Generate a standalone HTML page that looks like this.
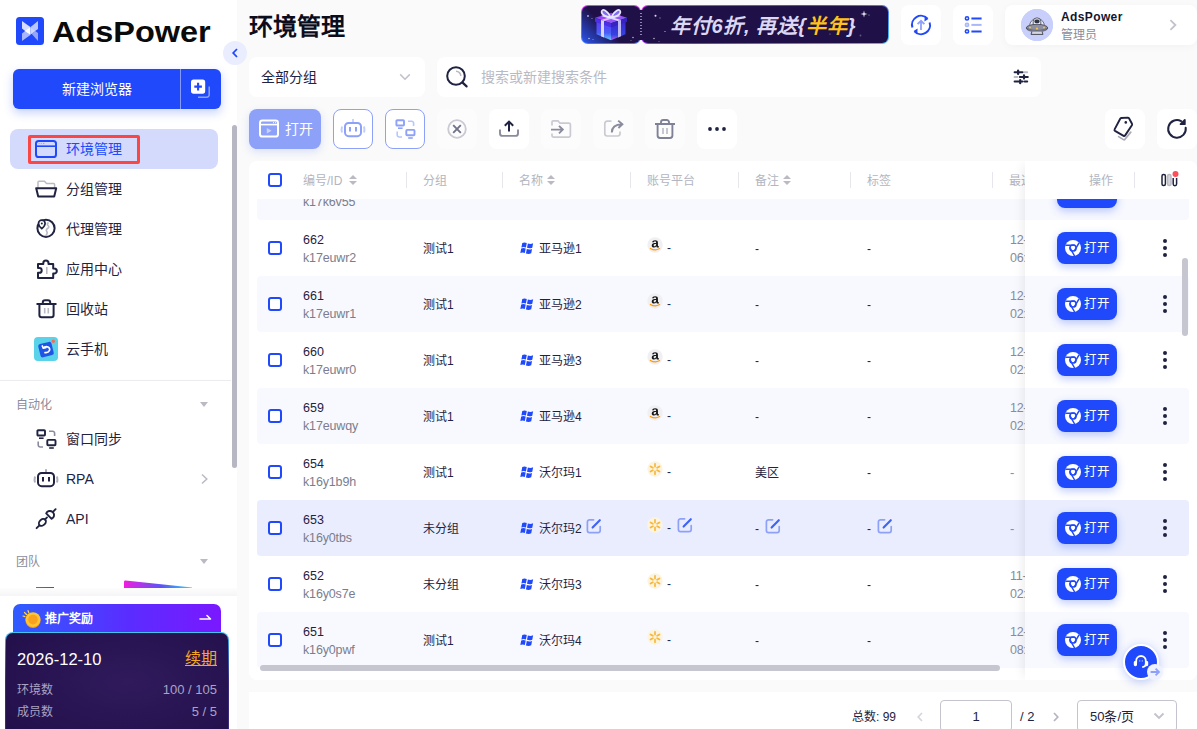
<!DOCTYPE html>
<html lang="zh-CN">
<head>
<meta charset="utf-8">
<title>AdsPower</title>
<style>
*{box-sizing:border-box;margin:0;padding:0}
html,body{width:1197px;height:729px;overflow:hidden;background:#fafafa;font-family:"Liberation Sans",sans-serif;color:#1f2341;font-size:13px}
body{position:relative}
.a{position:absolute}
svg{display:block}
/* sidebar */
#side{left:0;top:0;width:237px;height:729px;background:#fff}
#logo{left:16px;top:17px;width:28px;height:28px;border-radius:4px;background:#2c55f6;overflow:hidden}
#brand{left:52px;top:13px;font-size:30px;line-height:38px;font-weight:bold;color:#0a0a0a;white-space:nowrap;transform:scaleX(1.082);transform-origin:0 0}
#collapse{left:223px;top:41px;width:24px;height:24px;border-radius:12px;background:#e9edfe;z-index:5}
#newb{left:13px;top:69px;width:208px;height:40px;border-radius:6px;background:#2049fb;box-shadow:0 4px 10px rgba(33,80,245,.25);color:#fff}
#newb .t{left:0;top:0;width:167px;height:40px;line-height:40px;text-align:center;font-size:14px}
#newb .d{left:167px;top:0;width:1px;height:40px;background:rgba(255,255,255,.45)}
.nav{left:10px;width:208px;height:40px;border-radius:8px}
.nav .ic{left:25px;top:9px;width:22px;height:22px}
.nav .tx{left:56px;top:0;line-height:40px;font-size:14px;white-space:nowrap;color:#1f2341}
.nav.on{background:#d3dafc}
.nav.on .tx{color:#2049fb}
.sec{left:16px;font-size:12px;color:#8a8c9a;line-height:16px;margin-top:1px}
.caret{left:200px;width:0;height:0;border-left:4px solid transparent;border-right:4px solid transparent;border-top:5px solid #b9bac4}
#sscroll{left:231.5px;top:125px;width:5px;height:343px;border-radius:3px;background:#b6b7c2}
/* main */
#title{left:249px;top:10px;font-size:24px;line-height:34px;font-weight:bold;color:#0c0d1c;white-space:nowrap}
.wb{background:#fff;border-radius:8px}

/* top */
#banner{left:581px;top:5px;width:308px;height:39px}
#banner .bl{left:0;top:0;width:60px;height:39px;border-radius:7px;background:linear-gradient(45deg,#2a55f0 0%,#1f1147 42%) padding-box,linear-gradient(180deg,#e63df2,#3f7bf7) border-box;border:1px solid transparent}
#banner .br{left:60px;top:0;width:248px;height:39px;border-radius:7px;background:linear-gradient(#1f1147,#1f1147) padding-box,linear-gradient(160deg,#e63df2 0%,#6a3be0 45%,#3fc3f2 100%) border-box;border:1px solid transparent}
#banner .bt{left:89px;top:8px;font-size:20px;line-height:26px;font-weight:bold;font-style:italic;color:#dcd8f3;white-space:nowrap;letter-spacing:.7px}
#banner .bt b{color:#ffc21a}
.tb{width:40px;height:40px}
#user{left:1005px;top:5px;width:192px;height:40px;box-shadow:0 2px 8px rgba(0,0,0,.03)}
#user .av{left:16px;top:4px;width:32px;height:32px;border-radius:16px;background:#c7cffa}
#user .un{left:56px;top:4px;font-size:12px;line-height:16px;font-weight:bold;color:#14162e;letter-spacing:.38px;white-space:nowrap}
#user .ur{left:56px;top:22px;font-size:12px;line-height:16px;color:#8a8c9a}
#grp{left:249px;top:57px;width:176px;height:40px}
#search{left:437px;top:57px;width:604px;height:40px}
#open{left:249px;top:109px;width:72px;height:40px;border-radius:8px;background:#8ea1f9;box-shadow:0 3px 8px rgba(33,80,245,.15)}
.tbtn{top:109px;width:40px;height:40px;border-radius:8px;background:#fff}
.tbtn.ol{border:1px solid #8ea1f9}
.tbtn.dis{background:#fcfcfd}
/* table */
#card{left:249px;top:161px;width:948px;height:519px;background:#fff;border-radius:8px;overflow:hidden}
#thead{left:0;top:0;width:948px;height:38px}
.th{top:12px;font-size:12px;line-height:16px;color:#b3b5c0;white-space:nowrap}
.vd{top:11px;width:1px;height:16px;background:#e6e7ec}
.so{top:14px;width:9px;height:11px}
.so:before,.so:after{content:"";position:absolute;left:0;border-left:4.5px solid transparent;border-right:4.5px solid transparent}
.so:before{top:0;border-bottom:4.5px solid #b9bac4}
.so:after{top:6px;border-top:4.5px solid #b9bac4}
.cb{width:14px;height:14px;border:2px solid #2049fb;border-radius:3px;background:#fff}
#tbody{left:8px;top:38px;width:932px;height:469px;overflow:hidden}
.row{left:0;width:932px;height:56px;border-radius:4px}
.row.st,.frow.st{background:#f8f9fe}
.row.hv,.frow.hv{background:#e9edfe}
.row .cb{left:11px;top:21px}
.c{top:1px;height:56px;line-height:56px;font-size:12px;white-space:nowrap;color:#1f2341}
.c.id{left:46px;line-height:18px;padding-top:10px}
.c.id b{display:block;font-weight:normal;font-size:12.5px;color:#1f2341}
.c.id span{display:block;font-size:12.5px;letter-spacing:-.15px;color:#7b7d8e}
.c.g{left:166px}
.c.n{left:262px}
.c.p{left:390px}
.c.r{left:498px}
.c.t{left:610px}
.c.l2{left:753px;line-height:18px;padding-top:10px;font-size:12.5px;letter-spacing:-.3px;color:#8a8c9a}
.c.l1{left:753px;font-size:13px;color:#8a8c9a}
.c svg{display:inline-block;vertical-align:middle}
.c .win{width:14px;height:13px;margin:-3px 5px 0 1px}
.c .pl{width:16px;height:16px;margin:-10px 4px 0 0}
.c em{font-style:normal}
.c.p em,.c.p .ed{position:relative;top:-1.5px}
.c .ed{width:16px;height:16px;margin:-7px 0 0 4px}
.c.p .ed,.c.r .ed,.c.t .ed{margin-left:5.5px}
#fixed{left:776px;top:0;width:172px;height:519px;background:#fff;box-shadow:-6px 0 10px -4px rgba(0,0,0,.08)}
#fhead{left:0;top:0;width:172px;height:38px}
#fbody{left:0;top:38px;width:164px;height:469px;overflow:hidden}
.frow{left:0;width:164px;height:56px;border-radius:0 4px 4px 0}
.ob{left:32px;top:12px;width:60px;height:32px;border-radius:8px;background:#2049fb;color:#fff;font-size:12.5px;line-height:33.5px;padding-left:27px;box-shadow:0 3px 8px rgba(33,80,245,.3);white-space:nowrap}
.ob svg{position:absolute;left:8px;top:8px;width:16px;height:16px}
.kb{left:138px;top:19px;width:4px;height:4px;border-radius:2px;background:#1f2341;box-shadow:0 7px 0 #1f2341,0 14px 0 #1f2341}
#vscroll{left:933.2px;top:97px;width:5.8px;height:78px;border-radius:3px;background:#c5c6cf}
#hscroll{left:11px;top:504px;width:740px;height:6px;border-radius:3px;background:#c5c6cf}
#pager{left:249px;top:692px;width:948px;height:40px;background:#fff}
.pg{font-size:13px;line-height:18px}
.pin{height:32px;border:1px solid #c3c4ce;border-radius:4px;line-height:32px;font-size:13px;color:#1f2341;background:#fff}
#help{left:1123px;top:644px;width:36px;height:36px;border-radius:18px;background:#2049fb;border:2px solid #fff;box-shadow:0 2px 10px rgba(33,80,245,.3)}

#promo{left:13px;top:604px;width:208px;height:34px;border-radius:7px 7px 0 0;background:linear-gradient(90deg,#2f5cff 0%,#5a2dff 55%,#7a18ff 100%)}
#plan{left:5px;top:632px;width:224px;height:110px;border-radius:8px;border:1px solid transparent;background:radial-gradient(ellipse at 55% 45%,#301a5c 0%,#25124e 70%,#210f49 100%) padding-box,linear-gradient(180deg,#43c6ee 0%,#3a6fc0 18%,#3a2a78 45%) border-box}
#plan .pl,#plan .pr{font-size:12px;line-height:18px;color:#a9a3c6;white-space:nowrap}
#plan .pr{font-size:13px}
</style>
</head>
<body>
<svg width="0" height="0" style="position:absolute">
<defs>
<symbol id="i-win" viewBox="0 0 13 12"><g fill="#2049fb"><path d="M2.1.9Q4.3 0 6.3 1L5.5 5Q3.5 4.1 1.3 5Z"/><path d="M7.3 1.4Q9.7 2.3 12.2 1.2L11.4 5.3Q9 6.3 6.5 5.4Z"/><path d="M1.1 6.1Q3.3 5.2 5.3 6.1L4.5 10.2Q2.5 9.3.3 10.2Z"/><path d="M6.3 6.5Q8.7 7.4 11.2 6.4L10.4 10.5Q8 11.5 5.5 10.6Z"/></g></symbol>
<symbol id="i-am" viewBox="0 0 16 16"><circle cx="8" cy="8" r="7.7" fill="#f0f0f3"/><path fill="#161616" d="M6.94 10.53Q5.9 10.53 5.32 9.97Q4.74 9.4 4.74 8.38Q4.74 7.28 5.46 6.7Q6.19 6.12 7.56 6.1L9.09 6.08V5.71Q9.09 5.01 8.85 4.68Q8.6 4.34 8.05 4.34Q7.54 4.34 7.3 4.57Q7.06 4.8 7 5.34L5.06 5.25Q5.24 4.21 6.02 3.67Q6.79 3.14 8.13 3.14Q9.48 3.14 10.21 3.8Q10.94 4.47 10.94 5.69V8.29Q10.94 8.89 11.08 9.12Q11.21 9.35 11.53 9.35Q11.74 9.35 11.94 9.31V10.31Q11.77 10.35 11.64 10.38Q11.51 10.41 11.38 10.43Q11.25 10.45 11.1 10.47Q10.95 10.48 10.75 10.48Q10.05 10.48 9.72 10.14Q9.39 9.79 9.32 9.13H9.28Q8.51 10.53 6.94 10.53ZM9.09 7.1 8.14 7.11Q7.5 7.14 7.23 7.25Q6.96 7.37 6.81 7.61Q6.67 7.84 6.67 8.24Q6.67 8.75 6.91 8.99Q7.14 9.24 7.53 9.24Q7.96 9.24 8.32 9Q8.68 8.77 8.89 8.35Q9.09 7.93 9.09 7.46Z"/><path d="M3.400 11.400Q8 14.400 12.600 11.600" stroke="#f90" stroke-width="1.200" fill="none" stroke-linecap="round"/></symbol>
<symbol id="i-wm" viewBox="0 0 16 16"><circle cx="8" cy="8" r="7.7" fill="#fdf4df"/><g stroke="#f6b73c" stroke-width="1.7" stroke-linecap="round"><path d="M8 2.8V5.6M8 10.4V13.2M3.5 5.4L5.9 6.8M10.1 9.2L12.5 10.6M3.5 10.6L5.9 9.2M10.1 6.8L12.5 5.4"/></g></symbol>
<symbol id="i-edit" viewBox="0 0 16 16"><path d="M14.2 8.6V12.4A2.2 2.2 0 0 1 12 14.6H3.6A2.2 2.2 0 0 1 1.4 12.4V4A2.2 2.2 0 0 1 3.6 1.8H7.6" fill="none" stroke="#8ea1f9" stroke-width="1.7" stroke-linecap="round"/><path d="M6.6 9.6L13.8 2.2" stroke="#3d63f7" stroke-width="2.1" stroke-linecap="round"/></symbol>
<symbol id="i-chrome" viewBox="0 0 16 16"><circle cx="8" cy="8" r="8" fill="#fff"/><g stroke="#2049fb" stroke-width="1.500" fill="none" stroke-linecap="round"><circle cx="8" cy="8" r="3.100"/><path d="M.9 5.3H9.6M13.9 3.1L9.5 10.7M9.3 15.5L5 7.9"/></g></symbol>
</defs>
</svg>
<div id="side" class="a">
  <div id="brand" class="a">AdsPower</div>
  <div id="newb" class="a"><div class="t a">新建浏览器</div><div class="d a"></div></div>
  <div class="nav on a" style="top:129px"><div class="tx a">环境管理</div></div>
  <div class="nav a" style="top:169px"><div class="tx a">分组管理</div></div>
  <div class="nav a" style="top:209px"><div class="tx a">代理管理</div></div>
  <div class="nav a" style="top:249px"><div class="tx a">应用中心</div></div>
  <div class="nav a" style="top:289px"><div class="tx a">回收站</div></div>
  <div class="nav a" style="top:329px"><div class="tx a">云手机</div></div>
  <div class="a" style="left:0;top:380px;width:231px;height:1px;background:#ececf0"></div>
  <div class="sec a" style="top:396px">自动化</div><div class="caret a" style="top:402px"></div>
  <div class="nav a" style="top:419px"><div class="tx a">窗口同步</div></div>
  <div class="nav a" style="top:459px"><div class="tx a">RPA</div></div>
  <div class="nav a" style="top:499px"><div class="tx a">API</div></div>
  <div class="sec a" style="top:553px">团队</div><div class="caret a" style="top:559px"></div>
  <svg class="a" style="left:199px;top:473px" width="10" height="12" viewBox="0 0 10 12" fill="none"><path d="M3 1.5L7.8 6L3 10.5" stroke="#b9bac4" stroke-width="1.5"/></svg>
  <svg class="a" style="left:190px;top:79px" width="21" height="20" viewBox="0 0 21 20" fill="none"><path d="M8 18.200H16.800A2.400 2.400 0 0 0 19.200 15.800V7.500" stroke="#8ea1f9" stroke-width="1.500"/><rect x="1" y=".5" width="14.200" height="14.200" rx="2.600" fill="#fff"/><path d="M8.100 3.800V11.400M4.300 7.600H11.900" stroke="#2049fb" stroke-width="2.100"/></svg>
  <div class="a" style="left:36px;top:587px;width:18px;height:1px;background:linear-gradient(90deg,#a23bf5,#3a4cf5)"></div>
  <svg class="a" style="left:124px;top:580px" width="68" height="8" viewBox="0 0 68 8"><defs><linearGradient id="tg" x1="0" x2="1" y1="0" y2="0"><stop offset="0" stop-color="#f21ce0"/><stop offset=".55" stop-color="#5a55f5"/><stop offset="1" stop-color="#2fd6f0"/></linearGradient></defs><path d="M0 8V2Q0 .5 1.500 .600L68 7.400V8Z" fill="url(#tg)"/></svg>
  <div class="a" style="left:0;top:588px;width:237px;height:8px;background:linear-gradient(180deg,#fdfdfd,#f5f5f7)"></div>
  <div id="promo" class="a"><svg class="a" style="left:9px;top:5px" width="20" height="20" viewBox="0 0 20 20"><circle cx="11" cy="11.500" r="7.600" fill="#f59a1b"/><circle cx="11" cy="10.600" r="7.400" fill="#ffc531"/><circle cx="11" cy="10.600" r="4.800" fill="#f8a21f"/><path d="M2.500 3.500L4.500 5.500M6 1.500L6.800 3.800M1 7L3 7.600" stroke="#ffd34d" stroke-width="1.200" stroke-linecap="round"/></svg><span class="a" style="left:32px;top:7px;font-size:12px;line-height:16px;font-weight:bold;color:#fff;white-space:nowrap">推广奖励</span><svg class="a" style="left:186px;top:9px" width="13" height="8" viewBox="0 0 13 8" fill="none"><path d="M1 6H11.500L8 2.500" stroke="#fff" stroke-width="1.600" stroke-linejoin="round" stroke-linecap="round"/></svg></div>
  <div id="plan" class="a">
    <span class="a" style="left:11px;top:15px;font-size:16.5px;line-height:22px;color:#fff;white-space:nowrap">2026-12-10</span>
    <span class="a" style="right:11px;top:15px;font-size:16px;line-height:22px;color:#f5a623;text-decoration:underline;white-space:nowrap">续期</span>
    <span class="a pl" style="left:11px;top:48px">环境数</span><span class="a pr" style="right:11px;top:48px">100 / 105</span>
    <span class="a pl" style="left:11px;top:70px">成员数</span><span class="a pr" style="right:11px;top:70px">5 / 5</span>
  </div>
  <svg class="a" style="left:16px;top:17px" width="28" height="28" viewBox="0 0 28 28"><rect width="28" height="28" rx="3.5" fill="#2049fb"/><path d="M6 4L14.3 10V17.6L9.2 14L6 11.6Z" fill="#d6ddff"/><path d="M6 24V16.4L9.2 14L14.3 17.6V18Z" fill="#a9b8fe"/><path d="M8.6 14L14.3 10.2V17.8Z" fill="#fff"/><path d="M22 4V12L19.2 14L14.6 17.4V10Z" fill="#b9c5ff"/><path d="M22 24V16L19.2 14L15.6 16.8Z" fill="#93a5fd"/><path d="M14.6 10.4L19.2 14L14.6 17.2Z" fill="#cdd6ff"/></svg>
  <svg class="a" style="left:35px;top:140px" width="22" height="18" viewBox="0 0 22 18" fill="none"><rect x="1" y="1" width="20" height="16" rx="2.600" stroke="#2049fb" stroke-width="2"/><path d="M1 6.200H21" stroke="#2049fb" stroke-width="1.600"/><path d="M3.600 3.600H4.600M5.800 3.600H6.800M8 3.600H9.400" stroke="#8ea1f9" stroke-width="1"/></svg>
  <svg class="a" style="left:35px;top:180px" width="23" height="19" viewBox="0 0 23 19" fill="none"><path d="M3 8V2.3A1 1 0 0 1 4 1.3H9.5L11.6 3.6H18.6A1 1 0 0 1 19.6 4.6V8" stroke="#b9bac4" stroke-width="1.5"/><path d="M1.2 8.3H21.2L19.2 16.6H3.2Z" stroke="#1f2341" stroke-width="2" stroke-linejoin="round"/></svg>
  <svg class="a" style="left:35px;top:217px" width="22" height="22" viewBox="0 0 22 22" fill="none"><circle cx="11" cy="11.3" r="8.6" stroke="#1f2341" stroke-width="2"/><path d="M13.5 5.5Q11.5 7 13 8.5Q14.8 10 12.5 11.5Q10.5 13 12 15Q12.8 16.5 10.5 19" stroke="#b9bac4" stroke-width="1.6"/><path d="M6.8 3.2A3.3 3.3 0 0 1 10.1 6.5C10.1 8.8 6.8 11.6 6.8 11.6S3.5 8.8 3.5 6.5A3.3 3.3 0 0 1 6.8 3.2Z" fill="#fff" stroke="#1f2341" stroke-width="1.7"/><circle cx="6.8" cy="6.4" r="1" fill="#1f2341"/></svg>
  <svg class="a" style="left:36px;top:258px" width="23" height="22" viewBox="0 0 23 22" fill="none"><path d="M2 20V14.8H3.3A2.4 2.4 0 0 0 3.3 10H2V6H7.3V5A2.6 2.6 0 0 1 12.5 5V6H17.2V10.4H18.2A2.6 2.6 0 0 1 18.2 15.6H17.2V20Z" stroke="#1f2341" stroke-width="2" stroke-linejoin="round"/><path d="M10.8 9V16" stroke="#b9bac4" stroke-width="1.6"/></svg>
  <svg class="a" style="left:36px;top:298px" width="21" height="21" viewBox="0 0 21 21" fill="none"><path d="M.5 6H20.5M6.8 6V4.5A2.3 2.3 0 0 1 9.1 2.2H11.9A2.3 2.3 0 0 1 14.2 4.5V6M3.4 6V17A2.3 2.3 0 0 0 5.7 19.3H15.3A2.3 2.3 0 0 0 17.6 17V6" stroke="#1f2341" stroke-width="2"/><path d="M8.7 10V15.5M12.3 10V15.5" stroke="#b9bac4" stroke-width="1.6"/></svg>
  <svg class="a" style="left:34px;top:337px" width="24" height="24" viewBox="0 0 24 24" fill="none"><rect width="24" height="24" rx="4" fill="#5ad3ea"/><rect x="5.2" y="5.8" width="13.6" height="13.6" rx="2.2" fill="#1f55e6" transform="rotate(-14 12 12.6)"/><path d="M9.3 11.2L8.3 9M9.3 11.2L11.6 10.6M9.3 11.2A3.6 2.9 -14 1 1 11 15.6" stroke="#fff" stroke-width="1.7" stroke-linecap="round"/><circle cx="19.3" cy="4.3" r="1.7" fill="#ff6b4a"/></svg>
  <svg class="a" style="left:35px;top:428px" width="23" height="22" viewBox="0 0 23 22" fill="none"><rect x="2.4" y="2.3" width="7.6" height="5.2" rx=".8" stroke="#1f2341" stroke-width="1.9"/><path d="M4 10.2H8.6" stroke="#1f2341" stroke-width="1.6"/><rect x="12.3" y="11.9" width="8.2" height="5.4" rx=".8" stroke="#1f2341" stroke-width="1.9"/><path d="M14.2 20H18.8" stroke="#1f2341" stroke-width="1.6"/><path d="M14 3.2H17.6A2 2 0 0 1 19.6 5.2V8" stroke="#8a8c9e" stroke-width="1.6"/><path d="M3.2 13.5V17A2 2 0 0 0 5.2 19H8" stroke="#8a8c9e" stroke-width="1.6"/></svg>
  <svg class="a" style="left:33px;top:468px" width="26" height="20" viewBox="0 0 26 20" fill="none"><path d="M13 1.2V4" stroke="#8a8c9e" stroke-width="1.5"/><rect x="5" y="5" width="16" height="13.2" rx="3.6" stroke="#1f2341" stroke-width="2"/><path d="M10 9V13.6M16 9V13.6" stroke="#1f2341" stroke-width="2"/><path d="M2 8.400Q1.200 11.400 2 14.600M24 8.400Q24.800 11.400 24 14.600" stroke="#aeafbb" stroke-width="2"/></svg>
  <svg class="a" style="left:35px;top:507px" width="23" height="23" viewBox="0 0 23 23" fill="none" stroke="#1f2341" stroke-width="1.9" stroke-linecap="round"><path d="M1.6 21.2L4.4 18.4"/><ellipse cx="7.4" cy="15.4" rx="4" ry="2.9" transform="rotate(-45 7.4 15.4)"/><path d="M9.8 12.6L12 10.4"/><path d="M11.2 6.4L16.6 11.8A4 4 0 0 0 18 5.4L17.6 5A4 4 0 0 0 11.2 6.4Z" stroke-linejoin="round"/><path d="M18 4.8L20.6 2.2"/></svg>
  <div class="a" style="left:28.400px;top:135.100px;width:111.900px;height:29.100px;border:3px solid #fb4646;border-radius:2px"></div>
  <div id="sscroll" class="a"></div>
</div>
<div id="collapse" class="a"><svg class="a" style="left:8px;top:6px" width="8" height="12" viewBox="0 0 8 12" fill="none"><path d="M6 2L2.200 6L6 10" stroke="#2049fb" stroke-width="1.800"/></svg></div>
<div id="title" class="a">环境管理</div>
<!-- top bar -->
<div id="banner" class="a">
  <div class="bl a"></div><div class="br a"></div>
  <div class="a" style="left:54px;top:4.500px;width:12px;height:30px;background:#1f1147"></div><div class="a" style="left:59px;top:8px;width:2px;height:24px;background:repeating-linear-gradient(180deg,#8d86b5 0 1.500px,transparent 1.500px 3px)"></div>
  <svg class="a" style="left:2px;top:2px" width="304" height="36" viewBox="0 0 304 36"><g fill="#fff"><circle cx="5" cy="9" r=".9" opacity=".7"/><circle cx="9" cy="11.500" r=".6" opacity=".5"/><circle cx="6" cy="31.500" r=".7" opacity=".8"/><circle cx="10" cy="32.500" r=".5" opacity=".6"/><circle cx="50" cy="30.500" r=".7" opacity=".8"/><circle cx="48" cy="33.500" r=".5" opacity=".5"/><circle cx="72.500" cy="8.800" r="1" opacity=".85"/><circle cx="77" cy="11" r=".8" opacity=".35"/><circle cx="82" cy="24.500" r=".6" opacity=".8"/><circle cx="71" cy="31.500" r=".7" opacity=".8"/><circle cx="76" cy="34.500" r=".5" opacity=".5"/><circle cx="286" cy="8" r=".6" opacity=".6"/><circle cx="277.500" cy="28.500" r=".9" opacity=".3"/><circle cx="247" cy="27" r=".5" opacity=".6"/><path d="M281 3.500L281.700 6.300L284.500 7L281.700 7.700L281 10.500L280.300 7.700L277.500 7L280.300 6.300Z" opacity=".9"/></g>
  <g transform="translate(11 .3)"><defs><linearGradient id="gl" x1="0" y1="0" x2="0" y2="1"><stop offset="0" stop-color="#5b3df5"/><stop offset=".6" stop-color="#4a5cf7"/><stop offset="1" stop-color="#63c8fa"/></linearGradient><linearGradient id="gr" x1="0" y1="0" x2="0" y2="1"><stop offset="0" stop-color="#3a25cf"/><stop offset=".7" stop-color="#3443e0"/><stop offset="1" stop-color="#b45cf5"/></linearGradient><linearGradient id="gt" x1="0" y1="0" x2="1" y2="1"><stop offset="0" stop-color="#5530f0"/><stop offset=".5" stop-color="#b54cf7"/><stop offset="1" stop-color="#3f6cf7"/></linearGradient></defs>
  <path d="M2.500 14.500L17 19.500V33L2.500 27Z" fill="url(#gl)"/><path d="M17 19.500L31.500 14.500V27L17 33Z" fill="url(#gr)"/>
  <path d="M1 10.500L17 5.500L33 10.500L17 16Z" fill="url(#gt)"/><path d="M1 10.500L17 16V20L1 14.400Z" fill="#4a2fe6"/><path d="M17 16L33 10.500V14.400L17 20Z" fill="#3723c4"/>
  <path d="M7 12.600L10 13.700V30.100L7 28.900Z" fill="#d9d4ff"/><path d="M24 13.700L27 12.600V28.900L24 30.100Z" fill="#bfb8f7"/>
  <path d="M7 8.600L10 7.700L27 12.600L24 13.700Z" fill="#e4e0ff"/><path d="M27 8.600L24 7.700L7 12.600L10 13.700Z" fill="#cfc9fb"/>
  <path d="M16.500 10C13.500 3 8 .5 7.600 4.500C7.400 7.500 12.500 9.500 16.500 10ZM17.500 10C20.500 3 26 .5 26.400 4.500C26.600 7.500 21.500 9.500 17.500 10Z" fill="#7f6cf0" stroke="#e9e6ff" stroke-width="1.700" stroke-linejoin="round"/></g></svg>
  <div class="bt a">年付6折, 再送{<b>半年</b>}</div>
</div>
<div class="wb a tb" style="left:901px;top:5px"></div>
<div class="wb a tb" style="left:953px;top:5px"></div>
<div id="user" class="wb a">
  <div class="av a"></div>
  <div class="un a">AdsPower</div>
  <div class="ur a">管理员</div>
</div>
<!-- filter row -->
<div id="grp" class="wb a"><span class="a" style="left:12px;top:0;line-height:40px;font-size:14px">全部分组</span></div>
<div id="search" class="wb a"><span class="a" style="left:44px;top:0;line-height:40px;font-size:14px;color:#b9bac4;white-space:nowrap">搜索或新建搜索条件</span></div>
<!-- toolbar -->
<div id="open" class="a"><span class="a" style="left:36px;top:0;line-height:40px;font-size:14px;color:#fff">打开</span></div>
<div class="tbtn ol a" style="left:333px"></div>
<div class="tbtn ol a" style="left:385px"></div>
<div class="tbtn dis a" style="left:437px"></div>
<div class="tbtn a" style="left:489px"></div>
<div class="tbtn dis a" style="left:541px"></div>
<div class="tbtn dis a" style="left:593px"></div>
<div class="tbtn dis a" style="left:645px"></div>
<div class="tbtn a" style="left:697px"></div>
<div class="tbtn a" style="left:1105px"></div>
<div class="tbtn a" style="left:1157px"></div>
<!-- table card -->
<div id="card" class="a">
  <div id="thead" class="a">
    <i class="cb a" style="left:19px;top:12px"></i>
    <span class="th a" style="left:54px">编号/ID</span><i class="so a" style="left:100px"></i>
    <i class="vd a" style="left:157px"></i><span class="th a" style="left:174px">分组</span>
    <i class="vd a" style="left:253px"></i><span class="th a" style="left:270px">名称</span><i class="so a" style="left:298px"></i>
    <i class="vd a" style="left:381px"></i><span class="th a" style="left:398px">账号平台</span>
    <i class="vd a" style="left:489px"></i><span class="th a" style="left:506px">备注</span><i class="so a" style="left:534px"></i>
    <i class="vd a" style="left:601px"></i><span class="th a" style="left:618px">标签</span>
    <i class="vd a" style="left:743px"></i><span class="th a" style="left:760px">最近打开</span>
  </div>
  <div id="tbody" class="a">
<div class="row st a" style="top:-35px"><div class="c id a"><b>&nbsp;</b><span>k17k6v55</span></div></div>
<div class="row a" style="top:21px"><i class="cb a"></i><div class="c id a"><b>662</b><span>k17euwr2</span></div><div class="c g a">测试1</div><div class="c n a"><svg class="win" viewBox="0 0 14 13"><use href="#i-win"/></svg>亚马逊1</div><div class="c p a"><svg class="pl" viewBox="0 0 16 16"><use href="#i-am"/></svg><em>-</em></div><div class="c r a">-</div><div class="c t a">-</div><div class="c l2 a">12-<br>06:</div></div>
<div class="row st a" style="top:77px"><i class="cb a"></i><div class="c id a"><b>661</b><span>k17euwr1</span></div><div class="c g a">测试1</div><div class="c n a"><svg class="win" viewBox="0 0 14 13"><use href="#i-win"/></svg>亚马逊2</div><div class="c p a"><svg class="pl" viewBox="0 0 16 16"><use href="#i-am"/></svg><em>-</em></div><div class="c r a">-</div><div class="c t a">-</div><div class="c l2 a">12-<br>02:</div></div>
<div class="row a" style="top:133px"><i class="cb a"></i><div class="c id a"><b>660</b><span>k17euwr0</span></div><div class="c g a">测试1</div><div class="c n a"><svg class="win" viewBox="0 0 14 13"><use href="#i-win"/></svg>亚马逊3</div><div class="c p a"><svg class="pl" viewBox="0 0 16 16"><use href="#i-am"/></svg><em>-</em></div><div class="c r a">-</div><div class="c t a">-</div><div class="c l2 a">12-<br>02:</div></div>
<div class="row st a" style="top:189px"><i class="cb a"></i><div class="c id a"><b>659</b><span>k17euwqy</span></div><div class="c g a">测试1</div><div class="c n a"><svg class="win" viewBox="0 0 14 13"><use href="#i-win"/></svg>亚马逊4</div><div class="c p a"><svg class="pl" viewBox="0 0 16 16"><use href="#i-am"/></svg><em>-</em></div><div class="c r a">-</div><div class="c t a">-</div><div class="c l2 a">12-<br>02:</div></div>
<div class="row a" style="top:245px"><i class="cb a"></i><div class="c id a"><b>654</b><span>k16y1b9h</span></div><div class="c g a">测试1</div><div class="c n a"><svg class="win" viewBox="0 0 14 13"><use href="#i-win"/></svg>沃尔玛1</div><div class="c p a"><svg class="pl" viewBox="0 0 16 16"><use href="#i-wm"/></svg><em>-</em></div><div class="c r a">美区</div><div class="c t a">-</div><div class="c l1 a">-</div></div>
<div class="row hv a" style="top:301px"><i class="cb a"></i><div class="c id a"><b>653</b><span>k16y0tbs</span></div><div class="c g a">未分组</div><div class="c n a"><svg class="win" viewBox="0 0 14 13"><use href="#i-win"/></svg>沃尔玛2<svg class="ed" viewBox="0 0 16 16"><use href="#i-edit"/></svg></div><div class="c p a"><svg class="pl" viewBox="0 0 16 16"><use href="#i-wm"/></svg><em>-</em><svg class="ed" viewBox="0 0 16 16"><use href="#i-edit"/></svg></div><div class="c r a">-<svg class="ed" viewBox="0 0 16 16"><use href="#i-edit"/></svg></div><div class="c t a">-<svg class="ed" viewBox="0 0 16 16"><use href="#i-edit"/></svg></div><div class="c l1 a">-</div></div>
<div class="row a" style="top:357px"><i class="cb a"></i><div class="c id a"><b>652</b><span>k16y0s7e</span></div><div class="c g a">未分组</div><div class="c n a"><svg class="win" viewBox="0 0 14 13"><use href="#i-win"/></svg>沃尔玛3</div><div class="c p a"><svg class="pl" viewBox="0 0 16 16"><use href="#i-wm"/></svg><em>-</em></div><div class="c r a">-</div><div class="c t a">-</div><div class="c l2 a">11-<br>02:</div></div>
<div class="row st a" style="top:413px"><i class="cb a"></i><div class="c id a"><b>651</b><span>k16y0pwf</span></div><div class="c g a">测试1</div><div class="c n a"><svg class="win" viewBox="0 0 14 13"><use href="#i-win"/></svg>沃尔玛4</div><div class="c p a"><svg class="pl" viewBox="0 0 16 16"><use href="#i-wm"/></svg><em>-</em></div><div class="c r a">-</div><div class="c t a">-</div><div class="c l2 a">12-<br>08:</div></div>
  </div>
  <div id="fixed" class="a">
    <div id="fhead" class="a"><span class="th a" style="left:64px">操作</span><i class="vd a" style="left:109px"></i></div>
    <div id="fbody" class="a">
<div class="frow st a" style="top:-35px"><div class="ob a"></div></div>
<div class="frow a" style="top:21px"><div class="ob a"><svg viewBox="0 0 16 16"><use href="#i-chrome"/></svg>打开</div><i class="kb a"></i></div>
<div class="frow st a" style="top:77px"><div class="ob a"><svg viewBox="0 0 16 16"><use href="#i-chrome"/></svg>打开</div><i class="kb a"></i></div>
<div class="frow a" style="top:133px"><div class="ob a"><svg viewBox="0 0 16 16"><use href="#i-chrome"/></svg>打开</div><i class="kb a"></i></div>
<div class="frow st a" style="top:189px"><div class="ob a"><svg viewBox="0 0 16 16"><use href="#i-chrome"/></svg>打开</div><i class="kb a"></i></div>
<div class="frow a" style="top:245px"><div class="ob a"><svg viewBox="0 0 16 16"><use href="#i-chrome"/></svg>打开</div><i class="kb a"></i></div>
<div class="frow hv a" style="top:301px"><div class="ob a"><svg viewBox="0 0 16 16"><use href="#i-chrome"/></svg>打开</div><i class="kb a"></i></div>
<div class="frow a" style="top:357px"><div class="ob a"><svg viewBox="0 0 16 16"><use href="#i-chrome"/></svg>打开</div><i class="kb a"></i></div>
<div class="frow st a" style="top:413px"><div class="ob a"><svg viewBox="0 0 16 16"><use href="#i-chrome"/></svg>打开</div><i class="kb a"></i></div>
    </div>
  </div>
  <div id="vscroll" class="a"></div>
  <div id="hscroll" class="a"></div>
</div>
<!-- pagination -->
<div id="pager" class="a">
  <span class="a" style="left:603px;top:17px;font-size:12px;line-height:16px;color:#1f2341;white-space:nowrap">总数: 99</span>
  <svg class="a" style="left:667px;top:19px" width="8" height="12" viewBox="0 0 8 12" fill="none"><path d="M6 2L2.200 6L6 10" stroke="#d5d6dd" stroke-width="1.700"/></svg>
  <div class="a pin" style="left:691px;top:8px;width:72px;text-align:center">1</div>
  <span class="a" style="left:771px;top:16px;font-size:13px;line-height:18px;white-space:nowrap">/ 2</span>
  <svg class="a" style="left:803px;top:19px" width="8" height="12" viewBox="0 0 8 12" fill="none"><path d="M2 2L5.800 6L2 10" stroke="#b4b5c0" stroke-width="1.700"/></svg>
  <div class="a pin" style="left:828px;top:8px;width:100px;padding-left:12px">50条/页</div>
</div>
<div id="help" class="a"></div>

<!-- toolbar icons -->
<svg class="a" style="left:259px;top:119px" width="21" height="20" viewBox="0 0 21 20" fill="none"><rect x="1" y="1.600" width="18" height="16" rx="2.400" stroke="#fff" stroke-width="2"/><path d="M1 5.600H19" stroke="#fff" stroke-width="1.600"/><path d="M7.800 9L12.600 11.800L7.800 14.600Z" fill="#c9d2fd"/><path d="M14 3.600H14.800M16.200 3.600H17" stroke="#fff" stroke-width="1.200"/></svg>
<svg class="a" style="left:340px;top:118px" width="26" height="21" viewBox="0 0 26 21" fill="none"><path d="M13 1V4" stroke="#b9c5fc" stroke-width="1.500"/><rect x="5" y="5" width="16" height="13.200" rx="3.600" stroke="#8ea1f9" stroke-width="2"/><path d="M10 9V13.600M16 9V13.600" stroke="#8ea1f9" stroke-width="2"/><path d="M2 8.400Q1.200 11.400 2 14.600M24 8.400Q24.800 11.400 24 14.600" stroke="#c3cdfd" stroke-width="2"/></svg>
<svg class="a" style="left:394px;top:118px" width="23" height="22" viewBox="0 0 23 22" fill="none"><rect x="2.400" y="2.300" width="7.600" height="5.200" rx=".8" stroke="#8ea1f9" stroke-width="1.900"/><path d="M4 10.200H8.600" stroke="#8ea1f9" stroke-width="1.600"/><rect x="12.300" y="11.900" width="8.200" height="5.400" rx=".8" stroke="#8ea1f9" stroke-width="1.900"/><path d="M14.200 20H18.800" stroke="#8ea1f9" stroke-width="1.600"/><path d="M14 3.200H17.600A2 2 0 0 1 19.600 5.200V8" stroke="#b9c5fc" stroke-width="1.600"/><path d="M3.200 13.500V17A2 2 0 0 0 5.200 19H8" stroke="#b9c5fc" stroke-width="1.600"/></svg>
<svg class="a" style="left:446px;top:118px" width="22" height="22" viewBox="0 0 22 22" fill="none"><circle cx="11" cy="11" r="8.800" stroke="#c9cad2" stroke-width="1.800"/><path d="M7.200 7.200L14.800 14.800M14.800 7.200L7.200 14.800" stroke="#70728a" stroke-width="1.900"/></svg>
<svg class="a" style="left:498px;top:119px" width="22" height="20" viewBox="0 0 22 20" fill="none"><path d="M2 10.500V14.500A2.400 2.400 0 0 0 4.400 16.900H17.600A2.400 2.400 0 0 0 20 14.500V10.500" stroke="#8a8c9e" stroke-width="1.900"/><path d="M11 12.500V3M6.800 6.800L11 2.600L15.200 6.800" stroke="#1f2341" stroke-width="2"/></svg>
<svg class="a" style="left:550px;top:119px" width="22" height="21" viewBox="0 0 22 21" fill="none"><path d="M2 6.500V3A1.200 1.200 0 0 1 3.200 1.800H8L10 4.200H18.800A1.600 1.600 0 0 1 20.400 5.800V16.600A1.600 1.600 0 0 1 18.800 18.200H3.600A1.600 1.600 0 0 1 2 16.600V14.500" stroke="#c9cad2" stroke-width="1.700"/><path d="M1 10.600H12.500M9 6.800L12.800 10.600L9 14.400" stroke="#8a8c9e" stroke-width="1.900"/></svg>
<svg class="a" style="left:603px;top:119px" width="22" height="20" viewBox="0 0 22 20" fill="none"><path d="M8.500 2.200H4.200A2.400 2.400 0 0 0 1.800 4.600V14.600A2.400 2.400 0 0 0 4.200 17H14.600A2.400 2.400 0 0 0 17 14.600V12.500" stroke="#c9cad2" stroke-width="1.700"/><path d="M8.800 13.500C8.800 8.500 12 5.400 19 5.200M15.200 1.600L19.400 5.200L15.400 9" stroke="#8a8c9e" stroke-width="1.900"/></svg>
<svg class="a" style="left:654px;top:118px" width="22" height="22" viewBox="0 0 22 22" fill="none"><path d="M1 6H21M7 6V4.300A2.300 2.300 0 0 1 9.300 2H12.700A2.300 2.300 0 0 1 15 4.300V6M3.600 6V17.600A2.400 2.400 0 0 0 6 20H16A2.400 2.400 0 0 0 18.400 17.600V6" stroke="#7f8196" stroke-width="1.900"/><path d="M9 10V16M13 10V16" stroke="#b9bac4" stroke-width="1.600"/></svg>
<svg class="a" style="left:707px;top:126px" width="20" height="6" viewBox="0 0 20 6"><circle cx="3" cy="3" r="1.900" fill="#1f2341"/><circle cx="10" cy="3" r="1.900" fill="#1f2341"/><circle cx="17" cy="3" r="1.900" fill="#1f2341"/></svg>
<svg class="a" style="left:1112px;top:115px" width="24" height="28" viewBox="0 0 24 28" fill="none"><path d="M6.600 21.600L11.400 24.600Q12.400 25.100 13 24.200L18.800 17.100" stroke="#a9aab6" stroke-width="1.700" stroke-linecap="round"/><path d="M9.200 3L15.800 2.600Q16.600 2.600 17 3.300L20 8.800Q20.300 9.500 19.900 10.200L13 20.600Q12.500 21.400 11.600 20.900L3 15.900Q2.100 15.300 2.600 14.400L8.200 3.700Q8.500 3.100 9.200 3Z" stroke="#1f2341" stroke-width="1.900" stroke-linejoin="round" fill="#fff"/><circle cx="13.800" cy="7.400" r="1.300" fill="#1f2341"/></svg>
<svg class="a" style="left:1165px;top:117px" width="24" height="24" viewBox="0 0 24 24" fill="none"><path d="M20.700 10.700A8.800 8.800 0 1 1 16.100 4.100" stroke="#1f2341" stroke-width="2" stroke-linecap="round"/><path d="M19.800 3V7.200H15.600Z" fill="#1f2341" stroke="#1f2341" stroke-width="1.800" stroke-linecap="round" stroke-linejoin="round"/></svg>
<!-- top icons -->
<svg class="a" style="left:909px;top:13px" width="24" height="24" viewBox="0 0 24 24" fill="none"><path d="M3.400 14.500A9 9 0 0 1 18.500 5.600M20.600 9.500A9 9 0 0 1 5.500 18.400" stroke="#2049fb" stroke-width="2"/><path d="M15.800 2.600L19.400 6L15.400 8.400Z" fill="#2049fb"/><path d="M8.200 21.400L4.600 18L8.600 15.600Z" fill="#2049fb"/><path d="M12 17V8M8.600 11.200L12 7.800L15.400 11.200" stroke="#8ea1f9" stroke-width="1.800"/></svg>
<svg class="a" style="left:963px;top:14px" width="22" height="22" viewBox="0 0 22 22" fill="none"><circle cx="4" cy="4.400" r="1.600" stroke="#2049fb" stroke-width="1.600"/><circle cx="4" cy="10.900" r="1.600" stroke="#a9b8fb" stroke-width="1.600" fill="#d6ddff"/><circle cx="4" cy="17.400" r="1.600" stroke="#2049fb" stroke-width="1.600"/><path d="M8.400 4.400H18.600M8.400 17.400H18.600" stroke="#2049fb" stroke-width="2"/><path d="M8.400 10.900H18.600" stroke="#a9b8fb" stroke-width="2"/></svg>
<svg class="a" style="left:1021px;top:9px" width="32" height="32" viewBox="0 0 32 32" fill="none"><circle cx="16" cy="16" r="16" fill="#c7cffa"/><path d="M8.600 17A7.400 7.600 0 0 1 23.400 17" stroke="#5f6273" stroke-width=".9" fill="#e9ecfb"/><path d="M12.200 16.500V12.600A3.800 3.800 0 0 1 19.800 12.600V16.500Z" fill="#f3f4f8" stroke="#4a4c5c" stroke-width=".9"/><rect x="13.400" y="10.600" width="5.200" height="3.600" rx="1.600" fill="#33364a"/><ellipse cx="16" cy="19" rx="10.800" ry="3.700" fill="#8d90a0" stroke="#4a4c5c" stroke-width=".9"/><path d="M6 19.500Q16 23.500 26 19.500" stroke="#5f6273" stroke-width=".8"/><circle cx="9" cy="18.400" r="1" fill="#f5c04a"/><circle cx="23" cy="18.400" r="1" fill="#f5c04a"/><circle cx="16" cy="19.600" r="1.100" fill="#f5c04a"/><path d="M11 22.500L10 25.400H22L21 22.500" stroke="#4a4c5c" stroke-width="1" fill="#d5d7e0"/></svg>
<svg class="a" style="left:1167px;top:18px" width="10" height="14" viewBox="0 0 10 14" fill="none"><path d="M3.400 2.200L8.400 7L3.400 11.800" stroke="#c1c2cc" stroke-width="1.800"/></svg>
<!-- filter icons -->
<svg class="a" style="left:399px;top:72px" width="12" height="10" viewBox="0 0 12 10" fill="none"><path d="M1.200 2.400L6 7.200L10.800 2.400" stroke="#c1c2cc" stroke-width="1.500"/></svg>
<svg class="a" style="left:445px;top:65px" width="24" height="24" viewBox="0 0 24 24" fill="none"><circle cx="11" cy="11" r="8.800" stroke="#1f2341" stroke-width="2"/><path d="M17.600 17.600L21.600 21.400" stroke="#1f2341" stroke-width="2.200" stroke-linecap="round"/><path d="M15.800 11A4.800 4.800 0 0 0 11 6.200" stroke="#b9bac4" stroke-width="1.500"/></svg>
<svg class="a" style="left:1013px;top:69px" width="17" height="16" viewBox="0 0 17 16" fill="none" stroke-linecap="round"><path d="M1.600 3.200H9.600M6.800 7.900H14.800M1.600 12.600H9.600M11.600 12.600H14.200" stroke="#1f2341" stroke-width="2"/><path d="M11.600 3.200H14.200M1.600 7.900H4.200" stroke="#b9bac4" stroke-width="2"/><path d="M5.100 1.600V4.900M11 6.300V9.600M7.200 11V14.200" stroke="#1f2341" stroke-width="2.200"/></svg>
<!-- column setting icon -->
<svg class="a" style="left:1160px;top:170px" width="20" height="17" viewBox="0 0 20 17" fill="none"><rect x="2" y="4.500" width="3.400" height="11" rx="1.500" stroke="#1f2341" stroke-width="1.500"/><rect x="7.600" y="4.500" width="3.400" height="11" rx="1.500" stroke="#b9bac4" stroke-width="1.500" fill="#d5d6dd"/><path d="M13.200 8V14A1.700 1.700 0 0 0 16.600 14V8" stroke="#1f2341" stroke-width="1.500"/><circle cx="15.500" cy="4" r="3" fill="#ff4d5a"/></svg>
<!-- pagination chevron / help -->
<svg class="a" style="left:1152px;top:711px" width="14" height="10" viewBox="0 0 14 10" fill="none"><path d="M2.500 2.500L7 7L11.500 2.500" stroke="#c1c2cc" stroke-width="1.800"/></svg>
<svg class="a" style="left:1131px;top:652px" width="20" height="20" viewBox="0 0 20 20" fill="none"><path d="M5.200 11V8.800A4.800 4.800 0 0 1 14.800 8.800V11.500Q14.800 14.800 11.200 15.200" stroke="#fff" stroke-width="1.800"/><rect x="2.800" y="9" width="3.200" height="5.200" rx="1.400" fill="#fff"/><rect x="14" y="9" width="3.200" height="5.200" rx="1.400" fill="#fff"/><path d="M8.700 8V9.800M11.300 8V9.800" stroke="#8ea1f9" stroke-width="1.100"/></svg>
<svg class="a" style="left:1147px;top:664px" width="16" height="16" viewBox="0 0 16 16" fill="none"><circle cx="8" cy="8" r="8" fill="#eef1fe"/><path d="M3.600 8H11.800M8.600 4.600L12 8L8.600 11.400" stroke="#8ea1f9" stroke-width="1.800"/></svg>
</body>
</html>
